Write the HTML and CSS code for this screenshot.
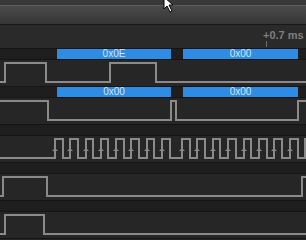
FILE: index.html
```html
<!DOCTYPE html>
<html lang="en">
<head>
  <meta charset="UTF-8">
  <link rel="stylesheet" href="styles.css">
  <title>Logic capture</title>
</head>
<body>
  <div class="toolbar">
    <div class="toolbar-top"></div>
    <div class="toolbar-main"></div>
    <svg class="cursor" width="14" height="14" viewBox="0 0 14 14">
      <polygon points="1,-3 1,9 4,6 7,12 9,11 6,5 10,5" fill="#fff" stroke="#000" stroke-width="1"/>
    </svg>
  </div>

  <div class="ruler">
    <span class="ruler-label">+0.7 ms</span>
    <span class="ruler-tick"></span>
  </div>

  <!-- channel 0 -->
  <div class="channel">
    <div class="decode">
      <div class="frame f1">0x0E</div>
      <div class="frame f2">0x00</div>
    </div>
    <svg class="trace" width="306" height="26" viewBox="0 0 306 26">
      <path d="M0 22 H5 V3 H46 V22 H110 V3 H156 V22 H306"/>
    </svg>
  </div>

  <!-- channel 1 -->
  <div class="channel">
    <div class="decode">
      <div class="frame f1">0x00</div>
      <div class="frame f2">0x00</div>
    </div>
    <svg class="trace" width="306" height="26" viewBox="0 0 306 26">
      <path d="M0 3 H48 V22 H171 V3 H176 V22 H298 V3 H306"/>
    </svg>
  </div>

  <!-- channel 2: clock -->
  <div class="channel">
    <div class="decode"></div>
    <svg class="trace" width="306" height="26" viewBox="0 0 306 26">
      <path d="M0 22 H55 V3 H63 V22 H70 V3 H78 V22 H86 V3 H93 V22 H101 V3 H108 V22 H116 V3 H124 V22 H131 V3 H139 V22 H147 V3 H154 V22 H162 V3 H170 V22 H182 V3 H190 V22 H197 V3 H205 V22 H213 V3 H220 V22 H228 V3 H236 V22 H244 V3 H251 V22 H259 V3 H267 V22 H274 V3 H282 V22 H290 V3 H298 V22 H305 V3 H306"/>
      <g class="marks">
        <polygon points="52,15 58,15 55,12"/>
        <polygon points="67,15 73,15 70,12"/>
        <polygon points="83,15 89,15 86,12"/>
        <polygon points="98,15 104,15 101,12"/>
        <polygon points="113,15 119,15 116,12"/>
        <polygon points="128,15 134,15 131,12"/>
        <polygon points="144,15 150,15 147,12"/>
        <polygon points="159,15 165,15 162,12"/>
        <polygon points="179,15 185,15 182,12"/>
        <polygon points="194,15 200,15 197,12"/>
        <polygon points="210,15 216,15 213,12"/>
        <polygon points="225,15 231,15 228,12"/>
        <polygon points="241,15 247,15 244,12"/>
        <polygon points="256,15 262,15 259,12"/>
        <polygon points="271,15 277,15 274,12"/>
        <polygon points="287,15 293,15 290,12"/>
      </g>
    </svg>
  </div>

  <!-- channel 3 -->
  <div class="channel">
    <div class="decode"></div>
    <svg class="trace" width="306" height="26" viewBox="0 0 306 26">
      <path d="M0 22 H3 V3 H47 V22 H302 V3 H306"/>
    </svg>
  </div>

  <!-- channel 4 -->
  <div class="channel">
    <div class="decode"></div>
    <svg class="trace" width="306" height="26" viewBox="0 0 306 26">
      <path d="M0 22 H5 V3 H44 V22 H306"/>
    </svg>
  </div>
  <div class="end-line"></div>
</body>
</html>
```

FILE: styles.css
```css
body {
  margin: 0;
  width: 306px;
  height: 240px;
  overflow: hidden;
  background-color: #262626;
  font-family: "Liberation Sans", Arial, sans-serif;
}

.toolbar {
  position: relative;
  height: 24px;
  border-bottom: 1px solid #181818;
}

.toolbar-top {
  height: 5px;
  background-color: #393939;
  border-bottom: 1px solid #5c5c5c;
}

.toolbar-main {
  height: 18px;
  background: linear-gradient(#4a4a4a, #363636);
}

.cursor {
  position: absolute;
  left: 163px;
  top: 0;
}

.ruler {
  position: relative;
  height: 23px;
  background-color: #2a2a2a;
}

.ruler-label {
  position: absolute;
  left: 263px;
  top: 4px;
  font-size: 11px;
  font-weight: bold;
  color: #7e7e7e;
  white-space: nowrap;
}

.ruler-tick {
  position: absolute;
  left: 266px;
  top: 16px;
  width: 1px;
  height: 6px;
  background-color: #6e6e6e;
}

.channel {
  border-top: 1px solid #151515;
}

.decode {
  display: flex;
  height: 10px;
  background-color: #1e1e1e;
  border-bottom: 1px solid #151515;
}

.frame {
  height: 10px;
  background-color: #2e8ce4;
  color: #d4e6f7;
  font-size: 10px;
  line-height: 10px;
  text-align: center;
}

.f1 {
  margin-left: 57px;
  width: 114px;
}

.f2 {
  margin-left: 12px;
  width: 115px;
}

.trace {
  display: block;
}

.trace path {
  fill: none;
  stroke: #8a8a8a;
  stroke-width: 2;
}

.marks polygon {
  fill: #8a8a8a;
}

.end-line {
  border-top: 1px solid #151515;
}
```
